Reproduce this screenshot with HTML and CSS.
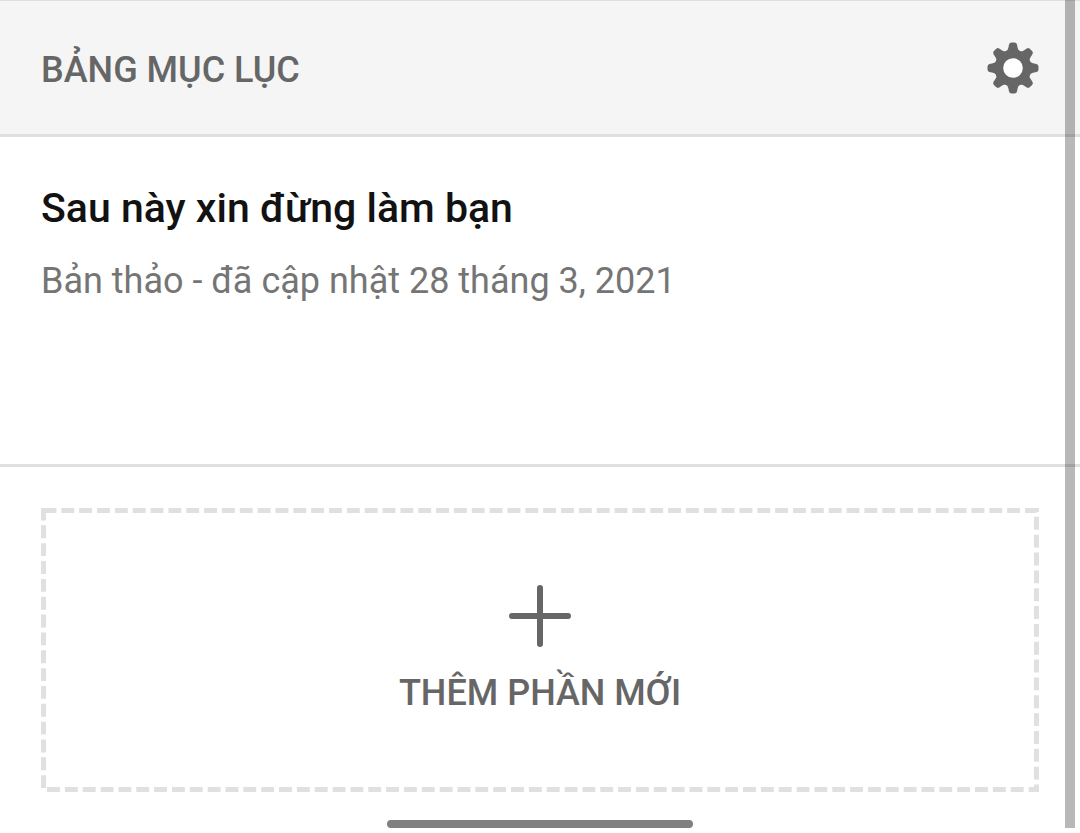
FILE: index.html
```html
<!DOCTYPE html>
<html lang="vi">
<head>
<meta charset="utf-8">
<meta name="viewport" content="width=device-width, initial-scale=1">
<title>Bảng mục lục</title>
<link rel="stylesheet" href="styles.css">
</head>
<body>
<header class="toolbar">
  <h1 class="toolbar-title">BẢNG MỤC LỤC</h1>
  <button class="settings" type="button" aria-label="Cài đặt">
    <svg class="gear" viewBox="0 0 52 52" aria-hidden="true">
      <g fill="#666">
        <circle cx="26" cy="26" r="18.500"/>
        <g id="teeth">
          <path id="tooth" d="M18.500 10Q20.800 8.500 21.300 6L22 2.500Q22.500 .5 24.500 .5H27.500Q29.500 .5 30 2.500L30.700 6Q31.200 8.500 33.500 10L31 14H21Z"/>
          <use href="#tooth" transform="rotate(90 26 26)"/>
          <use href="#tooth" transform="rotate(180 26 26)"/>
          <use href="#tooth" transform="rotate(270 26 26)"/>
        </g>
        <use href="#teeth" transform="rotate(45 26 26)"/>
      </g>
      <circle cx="26" cy="26" r="9.800" fill="#fff"/>
    </svg>
  </button>
</header>
<main>
  <a class="part" href="#part">
    <span class="part-title">Sau này xin đừng làm bạn</span>
    <span class="part-status">Bản thảo - đã cập nhật 28 tháng 3, 2021</span>
  </a>
  <div class="add-area">
    <button class="add" type="button">
      <svg class="outline" aria-hidden="true"><rect class="dashes" x="2.5" y="2.5" pathLength="2566"/></svg>
      <svg class="plus" viewBox="0 0 62 62" aria-hidden="true"><path d="M31 3V59M3 31H59"/></svg>
      <span>THÊM PHẦN MỚI</span>
    </button>
  </div>
</main>
<div class="home-bar"></div>
<div class="scroll-thumb"></div>
</body>
</html>
```
FILE: styles.css
```css
* { box-sizing: border-box; }

body {
  margin: 0;
  background: #fff;
  font-family: Roboto, "Noto Sans", sans-serif;
  position: relative;
}

button {
  border: 0;
  background: none;
  font: inherit;
  cursor: pointer;
}

.toolbar {
  display: flex;
  align-items: center;
  justify-content: space-between;
  height: 137px;
  padding: 0 41px;
  background: #f5f5f5;
  border-top: 1px solid #e0e0e0;
  border-bottom: 3px solid #dfdfdf;
}

.toolbar-title {
  margin: 0;
  padding-top: 4px;
  font-size: 36px;
  line-height: 44px;
  font-weight: 500;
  color: #666;
}

.settings {
  display: flex;
  padding: 0;
}

.gear {
  width: 52px;
  height: 52px;
}

.part {
  display: flex;
  flex-direction: column;
  gap: 25px;
  min-height: 330px;
  padding: 47px 41px;
  border-bottom: 3px solid #e0e0e0;
  text-decoration: none;
}

.part-title {
  font-size: 41px;
  line-height: 48px;
  font-weight: 500;
  color: #121212;
}

.part-status {
  font-size: 36px;
  line-height: 48px;
  color: #757575;
}

.add-area {
  padding: 41px 41px 28px;
}

.add {
  position: relative;
  display: flex;
  flex-direction: column;
  align-items: center;
  gap: 24px;
  width: 100%;
  min-height: 284px;
  padding: 77px 24px;
  font-size: 36px;
  line-height: 44px;
  font-weight: 500;
  color: #666;
}

.outline {
  position: absolute;
  inset: 0;
  width: 100%;
  height: 100%;
}

.dashes {
  width: calc(100% - 5px);
  height: calc(100% - 5px);
  fill: none;
  stroke: #e0e0e0;
  stroke-width: 5px;
  stroke-dasharray: 13 5;
}

.plus {
  width: 62px;
  height: 62px;
  fill: none;
  stroke: #666;
  stroke-width: 6px;
  stroke-linecap: round;
}

.home-bar {
  width: 306px;
  height: 8px;
  margin: 0 auto;
  border-radius: 4px;
  background: #808080;
}

.scroll-thumb {
  position: absolute;
  top: 0;
  right: 5px;
  bottom: 0;
  width: 10px;
  background: rgba(0, 0, 0, 0.28);
}
```
